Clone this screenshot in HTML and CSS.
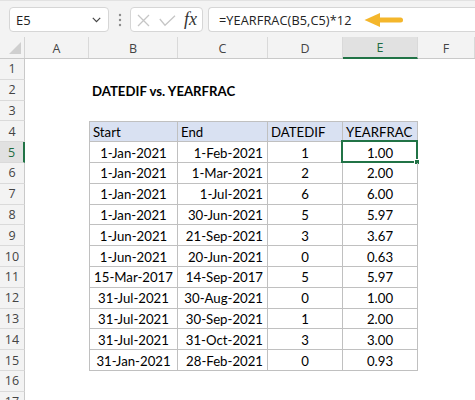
FILE: index.html
```html
<!DOCTYPE html>
<html>
<head>
<meta charset="utf-8">
<link rel="stylesheet" href="styles.css">
</head>
<body>
<div class="app">
  <div class="toolbar">
    <div class="namebox">
      <span class="nb-text">E5</span>
      <svg class="chev" width="9" height="6" viewBox="0 0 9 6"><polyline points="0.8,0.8 4.5,4.6 8.2,0.8" fill="none" stroke="#444" stroke-width="1.2"/></svg>
    </div>
    <svg class="dots" width="4" height="14" viewBox="0 0 4 14"><circle cx="2" cy="2" r="1.2" fill="#8c8c8c"/><circle cx="2" cy="7" r="1.2" fill="#8c8c8c"/><circle cx="2" cy="12" r="1.2" fill="#8c8c8c"/></svg>
    <div class="fxbox">
      <svg width="13" height="13" viewBox="0 0 13 13" class="ico-x"><path d="M1 1 L12 12 M12 1 L1 12" stroke="#c6c6c6" stroke-width="1.3" fill="none"/></svg>
      <svg width="17" height="12" viewBox="0 0 17 12" class="ico-ok"><polyline points="0.8,4 6,10.2 16,0.8" stroke="#c6c6c6" stroke-width="1.3" fill="none"/></svg>
      <span class="fx">fx</span>
    </div>
    <div class="formula">
      <span class="f-text">=YEARFRAC(B5,C5)*12</span>
      <svg class="arrow" width="40" height="16" viewBox="0 0 40 16"><line x1="15" y1="8" x2="36.5" y2="8" stroke="#f4b62b" stroke-width="5" stroke-linecap="round"/><polygon points="0.5,8 16,1 16,15" fill="#f4b62b"/></svg>
    </div>
  </div>

  <div class="sheet">
    <div class="row hdr">
      <div class="corner"><span class="tri"></span></div>
      <div class="ch">A</div><div class="ch">B</div><div class="ch">C</div><div class="ch">D</div><div class="ch selc">E</div><div class="ch">F</div>
    </div>
    <div class="row"><div class="rh">1</div><div></div><div></div><div></div><div></div><div></div><div></div></div>
    <div class="row"><div class="rh">2</div><div></div><div class="c title">DATEDIF vs. YEARFRAC</div><div></div><div></div><div></div><div></div></div>
    <div class="row"><div class="rh">3</div><div></div><div></div><div></div><div></div><div></div><div></div></div>
    <div class="row"><div class="rh">4</div><div></div><div class="c t th tb">Start</div><div class="c t th">End</div><div class="c t th">DATEDIF</div><div class="c t th">YEARFRAC</div><div></div></div>
    <div class="row"><div class="rh selr">5</div><div></div><div class="c t tb ctr">1-Jan-2021</div><div class="c t rt">1-Feb-2021</div><div class="c t ctr">1</div><div class="c t ctr active"><span class="selbox"><span class="handle"></span></span>1.00</div><div></div></div>
    <div class="row"><div class="rh">6</div><div></div><div class="c t tb ctr">1-Jan-2021</div><div class="c t rt">1-Mar-2021</div><div class="c t ctr">2</div><div class="c t ctr">2.00</div><div></div></div>
    <div class="row"><div class="rh">7</div><div></div><div class="c t tb ctr">1-Jan-2021</div><div class="c t rt">1-Jul-2021</div><div class="c t ctr">6</div><div class="c t ctr">6.00</div><div></div></div>
    <div class="row"><div class="rh">8</div><div></div><div class="c t tb ctr">1-Jan-2021</div><div class="c t rt">30-Jun-2021</div><div class="c t ctr">5</div><div class="c t ctr">5.97</div><div></div></div>
    <div class="row"><div class="rh">9</div><div></div><div class="c t tb ctr">1-Jun-2021</div><div class="c t rt">21-Sep-2021</div><div class="c t ctr">3</div><div class="c t ctr">3.67</div><div></div></div>
    <div class="row"><div class="rh">10</div><div></div><div class="c t tb ctr">1-Jun-2021</div><div class="c t rt">20-Jun-2021</div><div class="c t ctr">0</div><div class="c t ctr">0.63</div><div></div></div>
    <div class="row"><div class="rh">11</div><div></div><div class="c t tb ctr">15-Mar-2017</div><div class="c t rt">14-Sep-2017</div><div class="c t ctr">5</div><div class="c t ctr">5.97</div><div></div></div>
    <div class="row"><div class="rh">12</div><div></div><div class="c t tb ctr">31-Jul-2021</div><div class="c t rt">30-Aug-2021</div><div class="c t ctr">0</div><div class="c t ctr">1.00</div><div></div></div>
    <div class="row"><div class="rh">13</div><div></div><div class="c t tb ctr">31-Jul-2021</div><div class="c t rt">30-Sep-2021</div><div class="c t ctr">1</div><div class="c t ctr">2.00</div><div></div></div>
    <div class="row"><div class="rh">14</div><div></div><div class="c t tb ctr">31-Jul-2021</div><div class="c t rt">31-Oct-2021</div><div class="c t ctr">3</div><div class="c t ctr">3.00</div><div></div></div>
    <div class="row"><div class="rh">15</div><div></div><div class="c t tb ctr">31-Jan-2021</div><div class="c t rt">28-Feb-2021</div><div class="c t ctr">0</div><div class="c t ctr">0.93</div><div></div></div>
    <div class="row"><div class="rh">16</div><div></div><div></div><div></div><div></div><div></div><div></div></div>
    <div class="row"><div class="rh">17</div><div></div><div></div><div></div><div></div><div></div><div></div></div>
  </div>
</div>
</body>
</html>
```

FILE: styles.css
```css
* { box-sizing: border-box; }
html, body { margin: 0; padding: 0; }
body {
  width: 475px;
  height: 400px;
  overflow: hidden;
  background: #fff;
  font-family: "Lato", "Open Sans", sans-serif;
  color: #000;
}
.app { width: 475px; height: 400px; overflow: hidden; }

/* toolbar */
.toolbar {
  height: 37px;
  background: #f3f3f3;
  border-top: 1px solid #e2e2e2;
  display: flex;
  align-items: flex-start;
  padding: 6px 0 0 9px;
}
.namebox {
  width: 100px;
  height: 25px;
  background: #fff;
  border: 1px solid #d6d6d6;
  border-radius: 4px;
  display: flex;
  align-items: center;
  justify-content: space-between;
  padding: 0 7px 0 6px;
}
.nb-text {
  font-family: "Open Sans", sans-serif;
  font-size: 13px;
  color: #222;
}
.chev { margin-top: 1px; }
.dots { margin: 6px 0 0 9px; }
.fxbox {
  margin-left: 8px;
  width: 73px;
  height: 25px;
  background: #fff;
  border: 1px solid #d6d6d6;
  border-radius: 4px;
  display: flex;
  align-items: center;
  padding: 0 0 0 6px;
}
.ico-x { margin-top: 2px; }
.ico-ok { margin-left: 9px; margin-top: 2px; }
.fx {
  margin-left: 8px;
  font-family: "Liberation Serif", serif;
  font-style: italic;
  font-size: 18px;
  color: #333;
  line-height: 1;
  margin-top: -2px;
}
.formula {
  margin-left: 5px;
  flex: 1;
  height: 25px;
  background: #fff;
  border: 1px solid #d6d6d6;
  border-right: none;
  border-radius: 4px 0 0 4px;
  display: flex;
  align-items: center;
  padding-left: 10px;
}
.f-text {
  font-family: "Open Sans", sans-serif;
  font-size: 12.7px;
  color: #222;
  letter-spacing: 0.1px;
}
.arrow { margin-left: 12px; }

/* sheet */
.sheet { display: flex; flex-direction: column; }
.row {
  display: grid;
  grid-template-columns: 25px 64px 89px 90px 75px 75px 57px;
  height: 20.8px;
}
.row.hdr { height: 22px; background: #f3f3f3; border-bottom: 1px solid #c9c9c9; }
.corner {
  position: relative;
  border-right: 1px solid #d4d4d4;
}
.tri {
  position: absolute;
  right: 3px;
  bottom: 4px;
  width: 0; height: 0;
  border-left: 12px solid transparent;
  border-bottom: 12px solid #cfcfcf;
}
.ch {
  border-right: 1px solid #d9d9d9;
  display: flex;
  align-items: center;
  justify-content: center;
  font-family: "Open Sans", sans-serif;
  font-size: 12.5px;
  color: #444;
  padding-top: 1px;
}
.ch.selc {
  background: #e1e1e1;
  color: #1e6b41;
  border-bottom: 2px solid #217346;
  margin-bottom: -1px;
}
.rh {
  background: #f3f3f3;
  border-right: 1px solid #c9c9c9;
  border-bottom: 1px solid #dadada;
  display: flex;
  align-items: center;
  justify-content: center;
  font-family: "Open Sans", sans-serif;
  font-size: 12.5px;
  color: #444;
}
.rh.selr {
  background: #e1e1e1;
  color: #1e6b41;
  border-right: 2px solid #217346;
}

.c {
  display: flex;
  align-items: center;
  font-size: 13.2px;
  white-space: nowrap;
  padding: 1px 3px 0 3px;
  position: relative;
}
.title { font-weight: 700; font-size: 13.2px; overflow: visible; }
.t {
  border-right: 1px solid #c0c0c0;
  border-bottom: 1px solid #c0c0c0;
}
.tb { border-left: 1px solid #c0c0c0; }
.th { background: #d9e1f2; border-top: 1px solid #c0c0c0; }
.ctr { justify-content: center; }
.rt { justify-content: flex-end; padding-right: 4px; }

.selbox {
  position: absolute;
  left: -2px; top: -2px; right: -1px; bottom: -1px;
  border: 2px solid #217346;
}
.handle {
  position: absolute;
  right: -4px;
  bottom: -4px;
  width: 6px;
  height: 6px;
  background: #217346;
  border: 1px solid #fff;
}
```
